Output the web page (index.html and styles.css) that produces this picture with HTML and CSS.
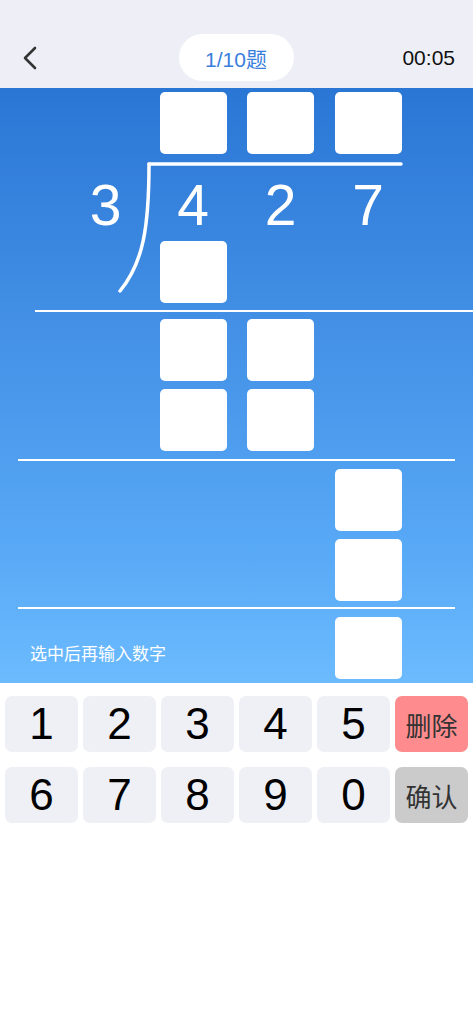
FILE: index.html
```html
<!DOCTYPE html>
<html lang="zh">
<head>
  <meta charset="UTF-8" />
  <meta name="viewport" content="width=device-width, initial-scale=1" />
  <title>竖式除法</title>
  <link rel="stylesheet" href="styles.css">
</head>
<body>

  <header class="topbar">
    <button class="back-btn" aria-label="返回">
      <svg width="16" height="24" viewBox="0 0 16 24">
        <path d="M13 2 L3 12 L13 22" fill="none" stroke="#333" stroke-width="2.6" stroke-linecap="round" stroke-linejoin="round"/>
      </svg>
    </button>
    <div class="progress-pill">1/10题</div>
    <div class="timer">00:05</div>
  </header>

  <main class="board">
    <!-- division bracket: bar over the dividend + curved left side -->
    <svg class="bracket" viewBox="0 0 473 595" width="473" height="595">
      <path d="M149 76 L401 76" stroke="#fff" stroke-width="3.5" stroke-linecap="round" fill="none"/>
      <path d="M149 76 C149 140 143 175 120 203" stroke="#fff" stroke-width="3.5" stroke-linecap="round" fill="none"/>
    </svg>

    <div class="row">
      <span></span>
      <div class="cell"></div>
      <div class="cell"></div>
      <div class="cell"></div>
    </div>

    <div class="row digits">
      <span class="divisor">3</span>
      <span>4</span>
      <span>2</span>
      <span>7</span>
    </div>

    <div class="row">
      <span></span>
      <div class="cell"></div>
    </div>

    <hr class="rule rule-wide">

    <div class="row">
      <span></span>
      <div class="cell"></div>
      <div class="cell"></div>
    </div>
    <div class="row gap-top">
      <span></span>
      <div class="cell"></div>
      <div class="cell"></div>
    </div>

    <hr class="rule">

    <div class="row">
      <span></span>
      <span></span>
      <span></span>
      <div class="cell"></div>
    </div>
    <div class="row gap-top">
      <span></span>
      <span></span>
      <span></span>
      <div class="cell"></div>
    </div>

    <hr class="rule rule-last">

    <div class="row">
      <span class="hint">选中后再输入数字</span>
      <span></span>
      <span></span>
      <div class="cell"></div>
    </div>
  </main>

  <section class="keypad">
    <button class="key">1</button>
    <button class="key">2</button>
    <button class="key">3</button>
    <button class="key">4</button>
    <button class="key">5</button>
    <button class="key key-del">删除</button>
    <button class="key">6</button>
    <button class="key">7</button>
    <button class="key">8</button>
    <button class="key">9</button>
    <button class="key">0</button>
    <button class="key key-ok">确认</button>
  </section>

</body>
</html>
```

FILE: styles.css
```css
* {
  box-sizing: border-box;
  margin: 0;
  padding: 0;
}

body {
  width: 473px;
  min-height: 1024px;
  background: #fff;
  font-family: 'Liberation Sans', Arial, 'Noto Sans CJK SC', sans-serif;
}

.topbar {
  height: 88px;
  background: #eeeff6;
  display: grid;
  grid-template-columns: 1fr auto 1fr;
  align-items: center;
  padding: 27px 18px 0 20px;
}

.back-btn {
  background: none;
  border: none;
  width: 20px;
  height: 26px;
  display: flex;
  align-items: center;
  justify-content: center;
  margin-top: 1px;
}

.progress-pill {
  width: 115px;
  height: 47px;
  border-radius: 24px;
  background: #fff;
  color: #3a7edd;
  font-size: 21px;
  display: flex;
  align-items: center;
  justify-content: center;
  margin-left: -3px;
}

.timer {
  justify-self: end;
  font-size: 21px;
  color: #111;
}

.board {
  position: relative;
  height: 595px;
  padding-top: 4px;
  background: linear-gradient(180deg, #2a76d5 0%, #4390e6 40%, #56a7f5 75%, #6cbbff 100%);
}

.bracket {
  position: absolute;
  top: 0;
  left: 0;
  pointer-events: none;
}

.row {
  display: grid;
  grid-template-columns: 139px 67px 67px 67px;
  column-gap: 20.5px;
  height: 62px;
}

.row.gap-top {
  margin-top: 8px;
}

.cell {
  background: #fff;
  border-radius: 5px;
}

.row.digits {
  height: 87px;
  padding-top: 23px;
  color: #fff;
  font-size: 57px;
  line-height: 1;
  text-align: center;
}

.divisor {
  padding-left: 72px;
}

.rule {
  border: none;
  height: 2px;
  background: #fff;
  margin: 8px 18px 8px 18px;
}

.rule-wide {
  margin: 7px 0 7px 35px;
}

.rule-last {
  margin-top: 6px;
}

.hint {
  color: #fff;
  font-family: 'Noto Sans CJK SC', sans-serif;
  font-size: 17px;
  white-space: nowrap;
  padding-left: 30px;
  align-self: center;
  margin-top: 8px;
}

.keypad {
  display: grid;
  grid-template-columns: repeat(6, 73px);
  column-gap: 5px;
  row-gap: 15px;
  padding: 13px 5px;
}

.key {
  height: 56px;
  border: none;
  border-radius: 7px;
  background: #efeff6;
  color: #000;
  font-family: 'Liberation Sans', Arial, sans-serif;
  font-size: 44px;
}

.key-del,
.key-ok {
  font-family: 'Noto Sans CJK SC', sans-serif;
  font-size: 26px;
  color: #333;
}

.key-del {
  background: #fe8c8e;
}

.key-ok {
  background: #cbcbcb;
}
```
